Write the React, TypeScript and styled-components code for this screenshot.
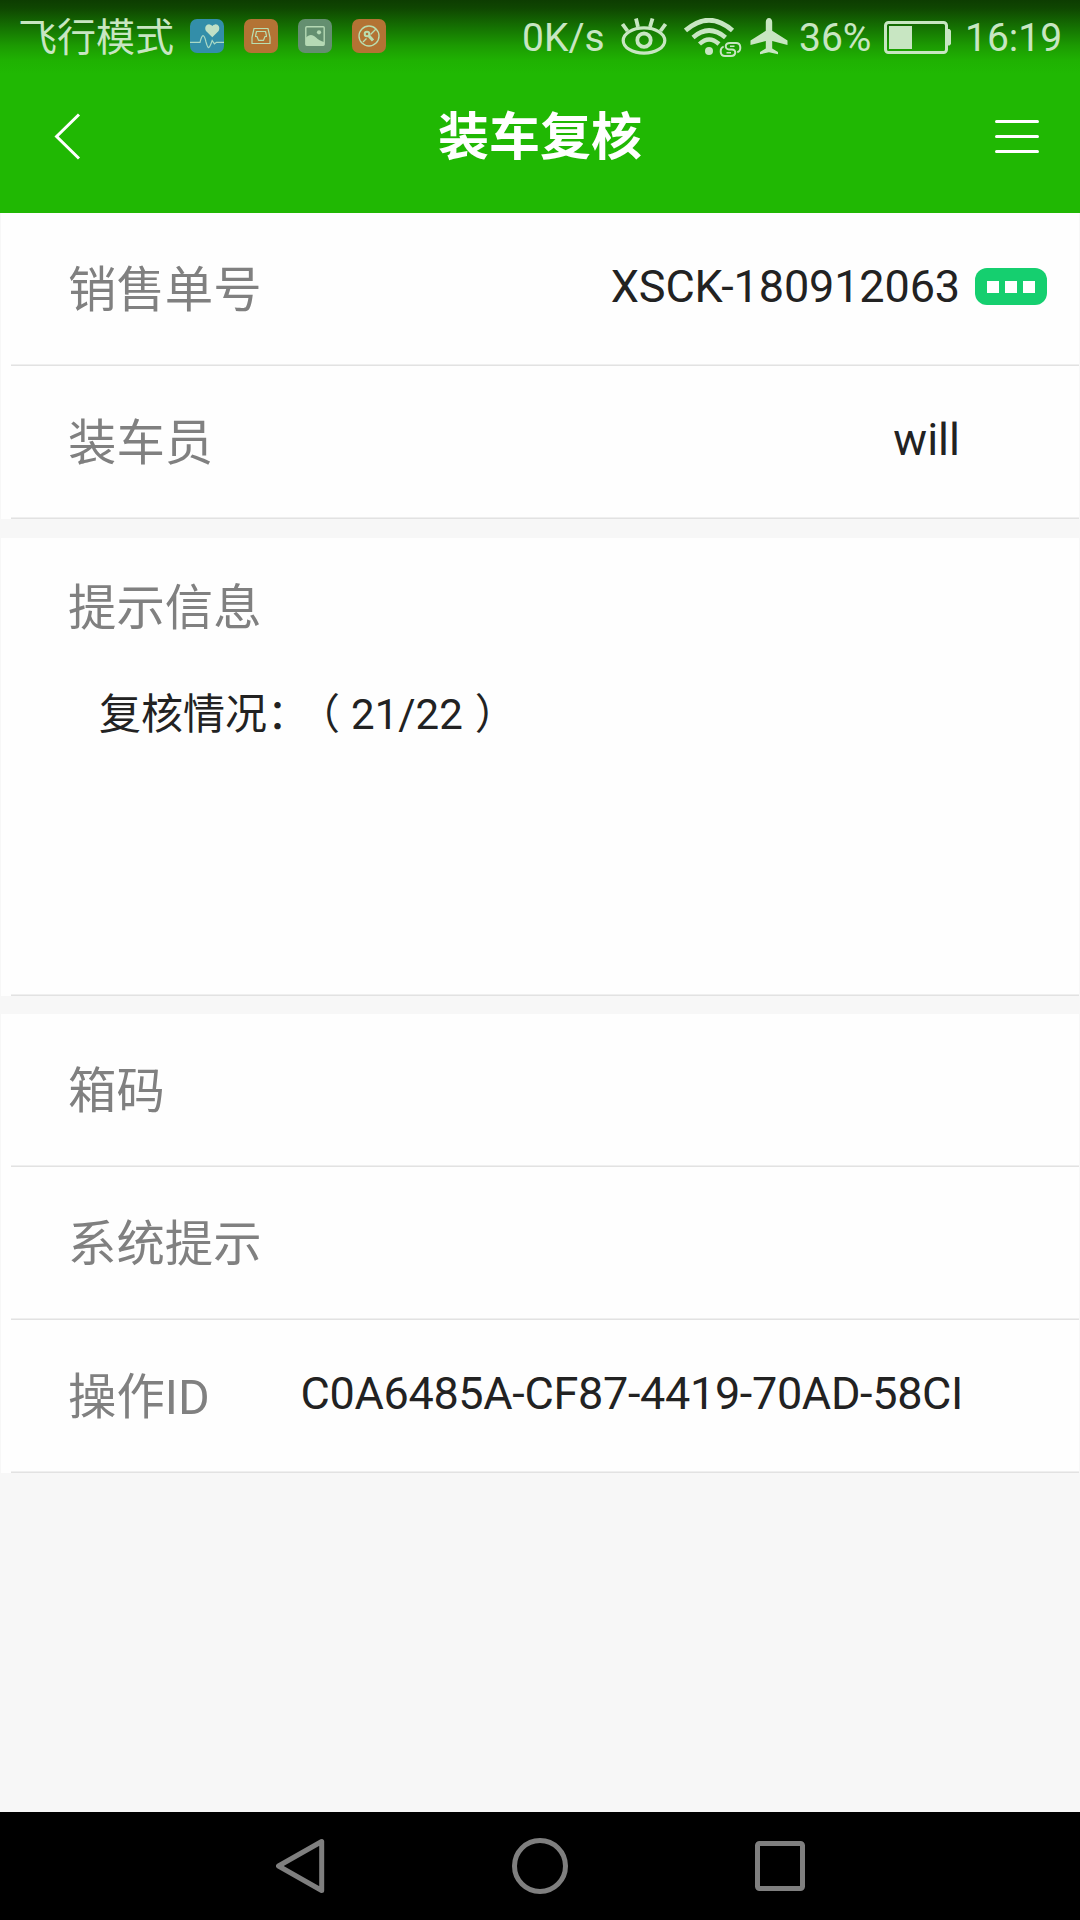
import React from "react";
import styled, { createGlobalStyle } from "styled-components";

const GlobalStyle = createGlobalStyle`
  * { box-sizing: border-box; }
  body { margin: 0; background: #f7f7f7; }
`;

const INK = "#c8e6c2";

const Screen = styled.div`
  width: 1080px;
  height: 1920px;
  display: flex;
  flex-direction: column;
  overflow: hidden;
  background: #f7f7f7;
  font-family: Roboto, "Noto Sans CJK SC", sans-serif;
`;

const Header = styled.header`
  height: 213px;
  flex: none;
  background: linear-gradient(#0d3d01 0, #0f4601 8px, #157302 28px, #1c9b02 46px, #1fb102 60px, #20b803 74px);
`;

const StatusBar = styled.div`
  height: 72px;
  display: flex;
  align-items: flex-start;
  justify-content: space-between;
  padding: 0 18px 0 18px;
  color: ${INK};
`;

const StatusGroup = styled.div`
  display: flex;
  align-items: flex-start;
`;

const StatusText = styled.span<{ $width: number; $indent?: number; $line?: number }>`
  width: ${(p) => p.$width}px;
  padding-left: ${(p) => p.$indent ?? 0}px;
  font-size: 39px;
  line-height: ${(p) => p.$line ?? 76}px;
  white-space: nowrap;
`;

const Glyph = styled.svg<{ $ml?: number; $mt?: number }>`
  display: block;
  flex: none;
  margin-left: ${(p) => p.$ml ?? 0}px;
  margin-top: ${(p) => p.$mt ?? 0}px;
`;

const AppIcons = styled.div`
  display: flex;
  gap: 20px;
  margin: 19px 0 0 16px;
`;

const AppIcon = styled.div<{ $bg: string }>`
  width: 34px;
  height: 34px;
  border-radius: 7px;
  background: ${(p) => p.$bg};
  overflow: hidden;
`;

const TitleBar = styled.div`
  height: 141px;
  display: grid;
  grid-template-columns: 200px 1fr 200px;
`;

const Title = styled.h1`
  margin: 0;
  text-align: center;
  font-size: 51px;
  line-height: 131px;
  font-weight: 700;
  color: #fff;
`;

const MenuCell = styled.div`
  display: flex;
  justify-content: flex-end;
`;

const Group = styled.section<{ $gap?: number }>`
  margin-bottom: ${(p) => p.$gap ?? 19}px;
  padding: 0 1px;
  flex: none;
`;

const Row = styled.div<{ $height?: number }>`
  height: ${(p) => p.$height ?? 153}px;
  display: flex;
  flex-direction: column;
  background: #fefefe;
`;

const RowBody = styled.div`
  flex: 1;
  min-height: 0;
  display: flex;
  align-items: flex-start;
  padding: 0 119px 0 67px;
`;

const Divider = styled.div`
  flex: none;
  height: 2px;
  margin-left: 10px;
  border-top: 1px solid #efefef;
  border-bottom: 1px solid #e2e2e2;
`;

const Label = styled.span<{ $line?: number }>`
  font-size: 48.4px;
  line-height: ${(p) => p.$line ?? 156}px;
  color: #808080;
  white-space: nowrap;
`;

const Value = styled.span<{ $tracking: number; $bleed: number }>`
  margin-left: auto;
  margin-right: ${(p) => -p.$bleed}px;
  font-size: 45px;
  line-height: 147px;
  letter-spacing: ${(p) => p.$tracking}px;
  color: #222;
  white-space: nowrap;
`;

const MoreButton = styled.button`
  width: 72px;
  height: 37px;
  margin: 55px -87px 0 15px;
  padding: 0;
  flex: none;
  display: flex;
  align-items: center;
  justify-content: center;
  gap: 6px;
  border: 0;
  border-radius: 12px;
  background: #15cf6f;
`;

const Dot = styled.i`
  width: 12px;
  height: 12px;
  background: #fff;
`;

const Stack = styled.div`
  flex: 1;
  display: flex;
  flex-direction: column;
  padding-left: 67px;
`;

const Message = styled.p`
  margin: -5px 0 0 31px;
  font-size: 42px;
  line-height: 80px;
  color: #222;
  white-space: nowrap;
`;

const Paren = styled.span<{ $ml: number; $mr?: number }>`
  margin-left: ${(p) => p.$ml}px;
  margin-right: ${(p) => p.$mr ?? 0}px;
`;

const NavBar = styled.nav`
  height: 108px;
  margin-top: auto;
  flex: none;
  display: flex;
  align-items: center;
  padding-left: 276px;
  background: #000;
`;

const NavKey = styled.svg`
  flex: none;
  margin-right: 187px;
`;

type FieldProps = { label: string; value?: string; tracking?: number; bleed?: number; more?: boolean };

const Field = ({ label, value, tracking = 0, bleed = 0, more }: FieldProps) => (
  <Row>
    <RowBody>
      <Label>{label}</Label>
      {value && (
        <Value $tracking={tracking} $bleed={bleed}>
          {value}
        </Value>
      )}
      {more && (
        <MoreButton aria-label="more">
          <Dot />
          <Dot />
          <Dot />
        </MoreButton>
      )}
    </RowBody>
    <Divider />
  </Row>
);

const HealthIcon = () => (
  <svg width="34" height="34" viewBox="0 0 34 34" fill="none">
    <path d="M22.3 18.2L16 12C14 8.5 16.5 5 19.5 5.4Q21.5 5.8 22.3 7Q23.1 5.8 25.1 5.4C28.1 5 30.6 8.5 28.6 12Z" fill="#bfe0c6" />
    <path d="M0 23.3H10Q11.5 17 13 16.6Q14.6 16.6 16 23Q17.6 28.6 18.6 28.6Q20 28 22.2 21.5L24.4 24.8L26.5 23.3H34" stroke="#a9d9c6" strokeWidth="1.2" />
  </svg>
);

const InboxIcon = () => (
  <svg width="34" height="34" viewBox="0 0 34 34" fill="none" stroke="#b9deb0" strokeWidth="1.2" strokeLinejoin="round">
    <path d="M10 9.5H24L26 18.5V24.5H8V18.5Z" />
    <path d="M11.5 17L12.5 12.5H21.5L22.5 17M11 17.5H13L14.5 21.3H19.5L21 17.5H23" />
  </svg>
);

const PictureIcon = () => (
  <svg width="34" height="34" viewBox="0 0 34 34" fill="none">
    <rect x="7.8" y="7.8" width="18.4" height="18.4" rx="1" stroke="#b5d9b4" strokeWidth="1.4" />
    <circle cx="21" cy="13.3" r="2.1" fill="#b5d9b4" />
    <path d="M8 18.5C11 15 15 15.2 18 18.5C20 20.5 23 22.5 26 23V26H8Z" fill="#b5d9b4" />
  </svg>
);

const ToolIcon = () => (
  <svg width="34" height="34" viewBox="0 0 34 34" fill="none" stroke="#b9deb0">
    <circle cx="17" cy="17" r="10" strokeWidth="1.4" />
    <circle cx="15" cy="15" r="2.3" strokeWidth="2" />
    <path d="M17 17L21 21.5" strokeWidth="3" />
    <path d="M24 10L18.5 15.5M14.5 19.5L11 23" strokeWidth="1.4" />
  </svg>
);

const EyeIcon = () => (
  <Glyph $mt={18} width="46" height="38" viewBox="0 0 46 38" fill="none" stroke={INK} strokeLinecap="butt">
    <ellipse cx="23" cy="22.5" rx="20.8" ry="12.7" strokeWidth="3.2" />
    <circle cx="23" cy="22.2" r="6.7" strokeWidth="3.8" />
    <path d="M1.5 6L6.5 13M15 .5L17 9M31.5 .5L29 9M44.5 6L39.5 13" strokeWidth="3.8" />
  </Glyph>
);

const WifiIcon = () => (
  <Glyph $ml={17} $mt={18} width="58" height="40" viewBox="0 0 58 40" fill="none" stroke={INK} strokeLinecap="butt">
    <path d="M1.5 12.5Q25 -8 48.5 12.5" strokeWidth="4.8" />
    <path d="M9 19.5Q25 5.5 41.5 19.5" strokeWidth="4.6" />
    <path d="M15.5 26Q25 17 35 26" strokeWidth="4.4" />
    <circle cx="25" cy="33" r="4" fill={INK} stroke="none" />
    <path
      d="M53.3 34.3C57.5 33 57.5 25 52 25H46C40.5 25 40.5 31.4 45 31.4H48C52.5 31.4 52.5 38 47 38H41C35.5 38 35.5 30 39.7 28.6"
      strokeWidth="2"
    />
    <path d="M46 28.3H50.5M42.5 34.8H47" strokeWidth="1.4" />
  </Glyph>
);

const PlaneIcon = () => (
  <Glyph $ml={8} $mt={18} width="38" height="37" viewBox="0 0 38 37" fill={INK}>
    <path d="M19 0C21 0 22.2 1.8 22.2 4V12.8L37.5 22.5V27L22.2 23V30.5L28 34V36.3L19 34.3L10 36.3V34L15.8 30.5V23L.5 27V22.5L15.8 12.8V4C15.8 1.8 17 0 19 0Z" />
  </Glyph>
);

const BatteryIcon = () => (
  <Glyph $mt={21} width="68" height="33" viewBox="0 0 68 33" fill={INK}>
    <rect x="1.5" y="1.5" width="61" height="30" rx="3" fill="none" stroke={INK} strokeWidth="3" />
    <rect x="5" y="5" width="23" height="23" />
    <path d="M63 8H65.5L67 9.5V23L65.5 24.5H63Z" />
  </Glyph>
);

export default function App() {
  return (
    <Screen>
      <GlobalStyle />
      <Header>
        <StatusBar>
          <StatusGroup>
            <StatusText $width={156}>飞行模式</StatusText>
            <AppIcons>
              <AppIcon $bg="#338ea9"><HealthIcon /></AppIcon>
              <AppIcon $bg="#b37334"><InboxIcon /></AppIcon>
              <AppIcon $bg="#648f70"><PictureIcon /></AppIcon>
              <AppIcon $bg="#b37334"><ToolIcon /></AppIcon>
            </AppIcons>
          </StatusGroup>
          <StatusGroup>
            <StatusText $width={99} $line={77}>0K/s</StatusText>
            <EyeIcon />
            <WifiIcon />
            <PlaneIcon />
            <StatusText $width={96} $indent={11} $line={77}>36%</StatusText>
            <BatteryIcon />
            <StatusText $width={110} $indent={13} $line={77}>16:19</StatusText>
          </StatusGroup>
        </StatusBar>
        <TitleBar>
          <Glyph $ml={54} $mt={41} width="28" height="47" viewBox="0 0 28 47" fill="none" stroke="#fff" strokeWidth="3">
            <path d="M25 1.5L2.6 23.5L25 45.5" />
          </Glyph>
          <Title>装车复核</Title>
          <MenuCell>
            <Glyph $mt={48} width="85" height="34" viewBox="0 0 85 34" stroke="#fff" strokeWidth="3" strokeLinecap="round">
              <path d="M1.5 1.5H42.5M1.5 16.5H42.5M1.5 31.5H42.5" />
            </Glyph>
          </MenuCell>
        </TitleBar>
      </Header>

      <Group>
        <Field label="销售单号" value="XSCK-180912063" tracking={-0.13} more />
        <Field label="装车员" value="will" />
      </Group>

      <Group $gap={18}>
        <Row $height={458}>
          <Stack>
            <Label $line={142}>提示信息</Label>
            <Message>
              复核情况：<Paren $ml={10} $mr={11}>（</Paren>21/22<Paren $ml={12}>）</Paren>
            </Message>
          </Stack>
          <Divider />
        </Row>
      </Group>

      <Group>
        <Field label="箱码" />
        <Field label="系统提示" />
        <Field label="操作ID" value="C0A6485A-CF87-4419-70AD-58CI" tracking={-0.33} bleed={3} />
      </Group>

      <NavBar>
        <NavKey width="49" height="56" viewBox="0 0 49 56" fill="none" stroke="#7f7f7f" strokeWidth="5" strokeLinejoin="round">
          <path d="M45.7 3.5V52.5L2.5 28Z" />
        </NavKey>
        <NavKey width="56" height="56" viewBox="0 0 56 56" fill="none" stroke="#7f7f7f" strokeWidth="5">
          <circle cx="28" cy="28" r="25.5" />
        </NavKey>
        <NavKey width="50" height="50" viewBox="0 0 50 50" fill="none" stroke="#7f7f7f" strokeWidth="5">
          <rect x="2.5" y="2.5" width="45" height="45" rx="2" />
        </NavKey>
      </NavBar>
    </Screen>
  );
}
